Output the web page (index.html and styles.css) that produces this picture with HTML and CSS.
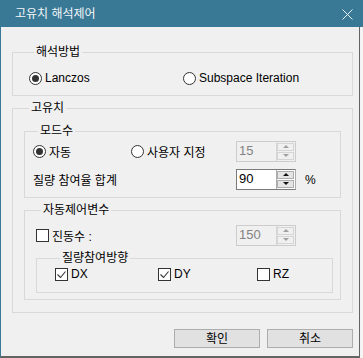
FILE: index.html
```html
<!DOCTYPE html>
<html lang="ko">
<head>
  <meta charset="UTF-8" />
  <title>고유치 해석제어</title>
  <link rel="stylesheet" href="styles.css">
</head>
<body>
  <div class="window">
    <div class="titlebar">
      <span class="title">고유치 해석제어</span>
      <svg class="close" width="11" height="11" viewBox="0 0 11 11">
        <path d="M0.5 0.5 L10.5 10.5 M10.5 0.5 L0.5 10.5" stroke="#e8f0f4" stroke-width="1" fill="none"/>
      </svg>
    </div>

    <div class="dialog">
      <fieldset class="group g-method">
        <legend>해석방법</legend>
        <div class="row">
          <label class="radio on w-lanczos"><span class="mark"></span>Lanczos</label>
          <label class="radio"><span class="mark"></span>Subspace Iteration</label>
        </div>
      </fieldset>

      <fieldset class="group g-eigen">
        <legend>고유치</legend>

        <fieldset class="group g-mode">
          <legend>모드수</legend>
          <div class="row tall">
            <label class="radio on w-auto"><span class="mark"></span>자동</label>
            <label class="radio w-user"><span class="mark"></span>사용자 지정</label>
            <div class="spin disabled">
              <span class="spin-val">15</span>
              <span class="spin-btns"><span class="up"></span><span class="down"></span></span>
            </div>
          </div>
          <div class="row tall gap-top">
            <span class="w-sum">질량 참여율 합계</span>
            <div class="spin">
              <span class="spin-val">90</span>
              <span class="spin-btns"><span class="up"></span><span class="down"></span></span>
            </div>
            <span class="unit">%</span>
          </div>
        </fieldset>

        <fieldset class="group g-auto">
          <legend>자동제어변수</legend>
          <div class="row tall">
            <label class="check w-freq"><span class="box"></span>진동수 :</label>
            <div class="spin disabled">
              <span class="spin-val">150</span>
              <span class="spin-btns"><span class="up"></span><span class="down"></span></span>
            </div>
          </div>

          <fieldset class="group g-dir">
            <legend>질량참여방향</legend>
            <div class="row">
              <label class="check on w-dx"><span class="box"><svg width="11" height="11" viewBox="0 0 11 11"><path d="M1.5 5.5 L4.5 8.5 L9.5 2.5" stroke="#333" stroke-width="1.1" fill="none"/></svg></span>DX</label>
              <label class="check on w-dy"><span class="box"><svg width="11" height="11" viewBox="0 0 11 11"><path d="M1.5 5.5 L4.5 8.5 L9.5 2.5" stroke="#333" stroke-width="1.1" fill="none"/></svg></span>DY</label>
              <label class="check"><span class="box"></span>RZ</label>
            </div>
          </fieldset>
        </fieldset>
      </fieldset>

      <div class="buttons">
        <button>확인</button>
        <button>취소</button>
      </div>
    </div>
  </div>
</body>
</html>
```

FILE: styles.css
```css
body {
  margin: 0;
  padding: 0;
  background: #f4f4f4;
  font-family: "Liberation Sans", "Noto Sans CJK KR", sans-serif;
  font-size: 12px;
  color: #000;
}

.window {
  width: 363px;
  height: 358px;
  overflow: hidden;
}

.titlebar {
  height: 27px;
  background: #3a7996;
  display: flex;
  align-items: center;
  padding-left: 15px;
  padding-right: 10px;
  justify-content: space-between;
}

.title {
  color: #f2f6f8;
  font-size: 12px;
  line-height: 14px;
}

.close {
  display: block;
  margin-top: 1px;
}

.dialog {
  box-sizing: border-box;
  width: 360px;
  height: 331px;
  background: #f0f0f0;
  border-left: 1px solid #3a7996;
  border-right: 1px solid #646464;
  border-bottom: 2px solid #646464;
  padding: 18px 6px 0 11px;
}

.group {
  margin: 0;
  min-width: 0;
  border: 1px solid #d9d9d9;
  padding: 0;
}

.group legend {
  padding: 0 2px;
  margin-left: 5px;
  line-height: 14px;
  font-size: 12px;
}

.row {
  display: flex;
  align-items: center;
  height: 16px;
}

.row.tall {
  height: 21px;
}

.gap-top {
  margin-top: 7px;
}

.g-method {
  padding: 11px 0 9px 16px;
}

.g-eigen {
  margin-top: 5px;
  padding: 9px 11px 12px 11px;
}

.g-mode {
  padding: 3px 0 7px 8px;
}

.g-auto {
  margin-top: 5px;
  padding: 8px 7px 6px 11px;
}

.g-dir {
  margin-top: 5px;
  padding: 1px 0 10px 18px;
}

/* radio + checkbox */
.radio, .check {
  display: inline-flex;
  align-items: center;
  gap: 3px;
  white-space: nowrap;
}

.radio .mark {
  box-sizing: border-box;
  width: 13px;
  height: 13px;
  border: 1px solid #333;
  border-radius: 50%;
  background: #fff;
  display: flex;
  align-items: center;
  justify-content: center;
}

.radio.on .mark::after {
  content: "";
  width: 7px;
  height: 7px;
  border-radius: 50%;
  background: #333;
}

.check .box {
  box-sizing: border-box;
  width: 13px;
  height: 13px;
  border: 1px solid #333;
  background: #fff;
  display: flex;
  align-items: center;
  justify-content: center;
}

.check .box svg {
  display: block;
}

.w-lanczos { width: 154px; }
.w-auto { width: 98px; }
.w-user { width: 105px; }
.w-sum { width: 203px; }
.w-freq { width: 200px; }
.w-dx { width: 103px; }
.w-dy { width: 99px; }

/* spinner */
.spin {
  box-sizing: border-box;
  width: 60px;
  height: 21px;
  display: flex;
  border: 1px solid #7a7a7a;
  border-right-color: #adadad;
  background: #fff;
}

.spin-val {
  flex: 1;
  padding-left: 2px;
  font-size: 13px;
  line-height: 18px;
}

.spin-btns {
  width: 17px;
  display: flex;
  flex-direction: column;
  gap: 1px;
  padding: 1px 1px 1px 0;
  border-left: 1px solid #adadad;
  background: #fff;
}

.spin-btns span {
  flex: 1;
  border: 1px solid #adadad;
  background: #e5e5e5;
  position: relative;
}

.spin-btns span::after {
  content: "";
  position: absolute;
  left: 50%;
  top: 50%;
  margin-left: -3px;
  margin-top: -2px;
  border-left: 3px solid transparent;
  border-right: 3px solid transparent;
}

.spin-btns .up::after {
  border-bottom: 3px solid #111;
}

.spin-btns .down::after {
  border-top: 3px solid #111;
}

.spin.disabled {
  border-color: #cccccc;
  background: #f0f0f0;
}

.spin.disabled .spin-val {
  color: #838383;
}

.spin.disabled .spin-btns {
  background: #f0f0f0;
  border-left-color: #d5d5d5;
}

.spin.disabled .spin-btns span {
  background: #f0f0f0;
  border-color: #d5d5d5;
}

.spin.disabled .spin-btns .up::after {
  border-bottom-color: #a0a0a0;
}

.spin.disabled .spin-btns .down::after {
  border-top-color: #a0a0a0;
}

.unit {
  margin-left: 9px;
}

/* buttons */
.buttons {
  display: flex;
  justify-content: flex-end;
  gap: 7px;
  margin-top: 16px;
}

.buttons button {
  width: 86px;
  height: 19px;
  padding: 0;
  background: #e1e1e1;
  border: 1px solid #adadad;
  font-family: "Liberation Sans", "Noto Sans CJK KR", sans-serif;
  font-size: 12px;
  line-height: 16px;
  color: #000;
}
```
